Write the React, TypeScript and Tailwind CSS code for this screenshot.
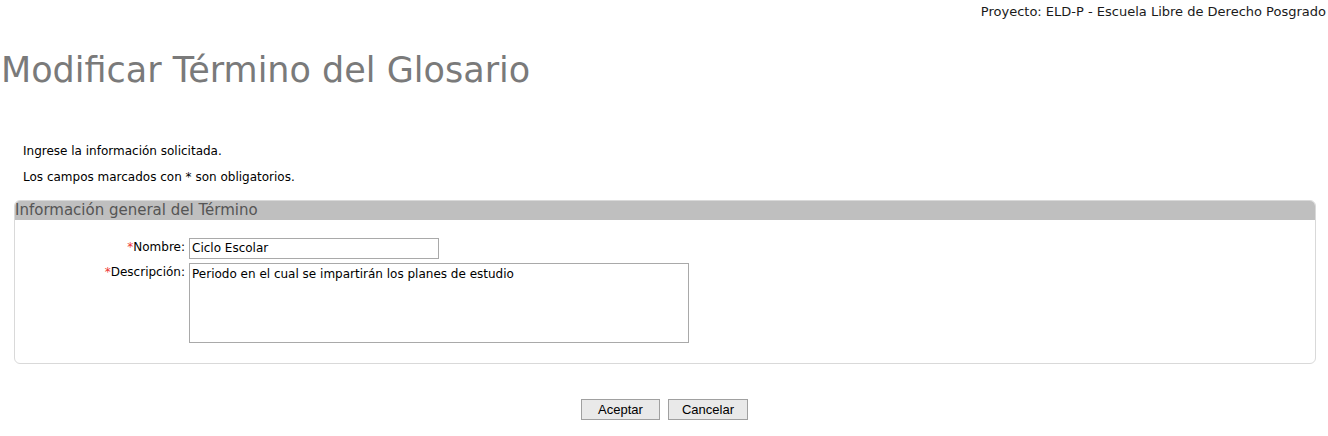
import React from "react";

export default function App() {
  return (
    <div className="w-[1328px] h-[436px] bg-white relative overflow-hidden" style={{ fontFamily: '"DejaVu Sans", Verdana, sans-serif' }}>
      <div className="flex justify-end pr-[2px] pt-[4px] text-[13px] leading-[16px] text-[#1a1a1a]">
        Proyecto: ELD-P - Escuela Libre de Derecho Posgrado
      </div>
      <h1 className="mt-[28px] ml-[1px] text-[35px] leading-[44px] text-[#7a7a7a] font-normal">
        Modificar Término del Glosario
      </h1>
      <div className="mt-[51px] ml-[23px] text-[12px] leading-[16px] text-black">
        <p>Ingrese la información solicitada.</p>
        <p className="mt-[10px]">Los campos marcados con * son obligatorios.</p>
      </div>
      <div className="mt-[15px] mx-[14px] w-[1302px] h-[164px] border border-[#d9d9d9] rounded-[6px] overflow-hidden">
        <div className="h-[19px] bg-[#bfbfbf] text-[15px] leading-[19px] text-[#555]">
          Información general del Término
        </div>
        <div className="mt-[18px] flex flex-col gap-[4px] text-[12px] leading-[16px]">
          <div className="flex items-start">
            <div className="w-[170px] text-right pt-[1px]"><span className="text-[#e33]">*</span>Nombre:</div>
            <div className="ml-[4px] w-[250px] h-[21px] border border-[#a9a9a9] px-[2px] leading-[19px]">Ciclo Escolar</div>
          </div>
          <div className="flex items-start">
            <div className="w-[170px] text-right pt-[1px]"><span className="text-[#e33]">*</span>Descripción:</div>
            <div className="ml-[4px] w-[500px] h-[80px] border border-[#a9a9a9] px-[2px] pt-[2px]">Periodo en el cual se impartirán los planes de estudio</div>
          </div>
        </div>
      </div>
      <div className="mt-[35px] flex justify-center gap-[8px] pl-[1px]" style={{ fontFamily: '"Liberation Sans", Arial, sans-serif' }}>
        <button className="w-[79px] h-[21px] border border-[#a0a0a0] bg-[#e9e9e9] text-[13px] text-black">Aceptar</button>
        <button className="w-[80px] h-[21px] border border-[#a0a0a0] bg-[#e9e9e9] text-[13px] text-black">Cancelar</button>
      </div>
    </div>
  );
}
